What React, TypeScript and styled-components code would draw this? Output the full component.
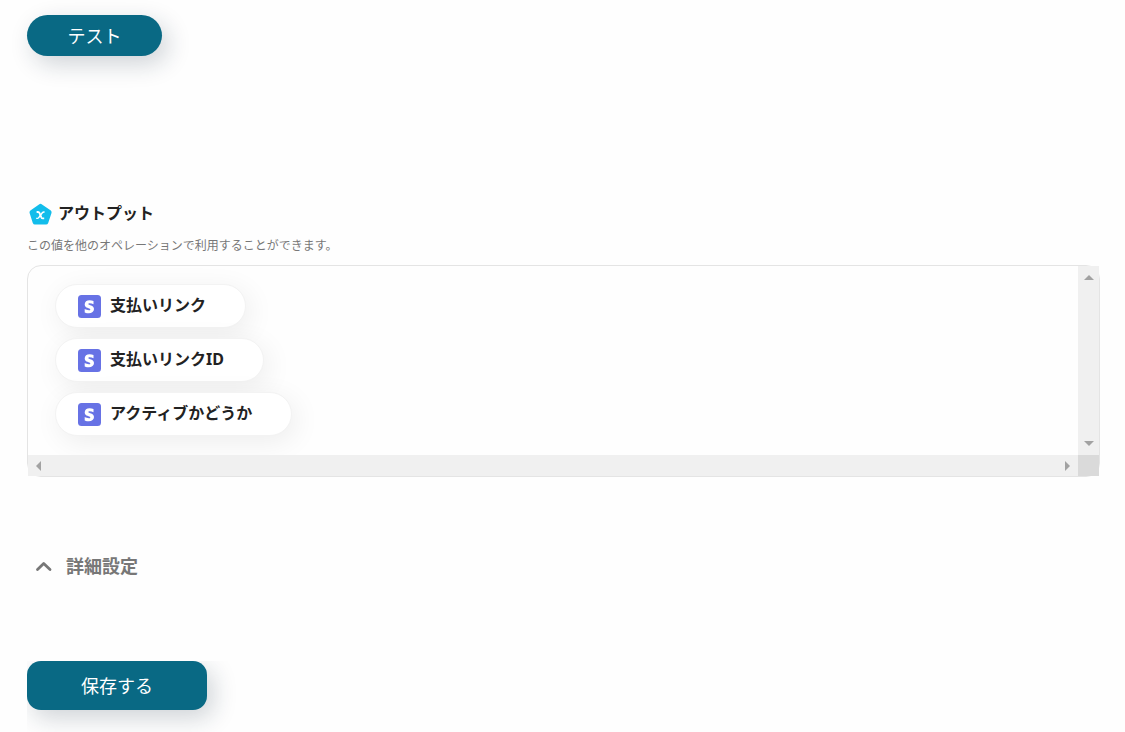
import React from "react";
import styled, { createGlobalStyle } from "styled-components";

const GlobalStyle = createGlobalStyle`
  *, *::before, *::after { box-sizing: border-box; }
  body {
    margin: 0;
    background: #fefefe;
    color: #222;
    font-family: "Noto Sans", "Noto Sans CJK JP", sans-serif;
    font-size: 16px;
  }
`;

const Page = styled.main`
  padding: 15px 25px 0 27px;
`;

const PrimaryButton = styled.button<{ $shape: "pill" | "card" }>`
  display: block;
  width: ${(p) => (p.$shape === "pill" ? "135px" : "180px")};
  height: ${(p) => (p.$shape === "pill" ? "41px" : "49px")};
  padding: 0;
  border: 0;
  border-radius: ${(p) => (p.$shape === "pill" ? "21px" : "14px")};
  background: #096984;
  color: #fff;
  font-family: inherit;
  font-size: 18px;
  line-height: 40px;
  box-shadow: 6px 8px 24px rgba(20, 40, 60, 0.2);
  cursor: pointer;
`;

const OutputSection = styled.section`
  margin-top: 144px;
`;

const Heading = styled.h2`
  display: flex;
  align-items: center;
  gap: 5px;
  height: 26px;
  margin: 0;
  font-size: 16px;
  font-weight: 700;
  line-height: 26px;

  svg {
    margin: 2px 0 0 2px;
  }
`;

const Description = styled.p`
  margin: 10px 0;
  color: #777;
  font-size: 12px;
  line-height: 19px;
`;

const OutputBox = styled.div`
  display: grid;
  grid-template-columns: 1fr 21px;
  grid-template-rows: auto 21px;
  border: 1px solid #e4e4e4;
  border-radius: 14px;
`;

const PillList = styled.ul`
  display: flex;
  flex-direction: column;
  align-items: flex-start;
  gap: 10px;
  margin: 0;
  padding: 18px 27px 19px;
  list-style: none;
`;

const Pill = styled.li`
  display: flex;
  align-items: center;
  gap: 9px;
  height: 44px;
  padding: 0 39px 0 22px;
  border: 1px solid #f3f3f3;
  border-radius: 22px;
  background: #fff;
  box-shadow: 4px 6px 28px rgba(0, 0, 0, 0.07);
  font-weight: 700;
  line-height: 24px;
`;

const PillLabel = styled.span`
  padding-bottom: 2px;
`;

const ScrollTrack = styled.div<{ $axis: "x" | "y" }>`
  display: flex;
  flex-direction: ${(p) => (p.$axis === "x" ? "row" : "column")};
  align-items: center;
  justify-content: space-between;
  padding: ${(p) => (p.$axis === "x" ? "0 8px" : "9px 0")};
  background: #f0f0f0;
`;

const ScrollCorner = styled.div`
  background: #dadada;
`;

const AdvancedToggle = styled.button`
  display: flex;
  align-items: center;
  gap: 14px;
  height: 28px;
  margin: 75px 0 81px 8px;
  padding: 0;
  border: 0;
  background: none;
  color: #777;
  font-family: inherit;
  font-size: 18px;
  font-weight: 700;
  line-height: 28px;
  cursor: pointer;
`;

const SaveArea = styled.div`
  height: 71px;
  overflow: hidden;
`;

const OutputIcon = () => (
  <svg width="24" height="22" viewBox="0 0 24 22" aria-hidden="true">
    <path
      d="M10 1.5Q11.5.2 13 1.5L21.8 7.4Q23 8.4 22.5 10L19.2 20Q18.6 21.5 17 21.5H6Q4.4 21.5 3.8 20L.6 10Q.1 8.4 1.4 7.4Z"
      fill="#12bdeb"
    />
    <path
      d="M7.6 9H9Q10.1 9 10.6 10.2L12.3 14.3Q12.8 15.4 13.8 15.4H15.2"
      fill="none"
      stroke="#fff"
      strokeWidth="1.8"
    />
    <path
      d="M15.6 9H14.9Q14 9 13.3 9.8L9.7 14.6Q9.1 15.4 8.2 15.4H7.2"
      fill="none"
      stroke="#fff"
      strokeWidth="1.4"
    />
  </svg>
);

const StripeIcon = () => (
  <svg width="23" height="23" viewBox="0 0 23 23" aria-hidden="true">
    <rect width="23" height="23" rx="3.5" fill="#6772e5" />
    <path
      d="M10.3 9.1C10.3 8.5 10.8 8.2 11.6 8.2C12.9 8.2 14.3 8.6 15.5 9.2V5.9C14.3 5.4 13 5.2 11.6 5.2C8.7 5.2 6.7 6.8 6.7 9.4C6.7 13.4 12.3 12.7 12.3 14.4C12.3 15.1 11.7 15.3 10.9 15.3C9.6 15.3 8 14.8 6.7 14.1V17.4C8 18 9.6 18.3 10.9 18.3C13.9 18.3 16 16.8 16 14.1C16 9.9 10.3 10.7 10.3 9.1Z"
      fill="#fff"
    />
  </svg>
);

const arrowPaths = {
  up: "M0 7L5 2L10 7Z",
  down: "M0 3L5 8L10 3Z",
  left: "M7 0L2 5L7 10Z",
  right: "M3 0L8 5L3 10Z",
};

const Arrow = ({ dir }: { dir: keyof typeof arrowPaths }) => {
  const vertical = dir === "up" || dir === "down";
  return (
    <svg
      width={vertical ? 10 : 5}
      height={vertical ? 5 : 10}
      viewBox={
        vertical ? `0 ${dir === "up" ? 2 : 3} 10 5` : `${dir === "left" ? 2 : 3} 0 5 10`
      }
      aria-hidden="true"
    >
      <path d={arrowPaths[dir]} fill="#a2a2a2" />
    </svg>
  );
};

const ChevronUp = () => (
  <svg width="17" height="12" viewBox="0 0 17 12" aria-hidden="true">
    <path
      d="M2.5 9.5L8.7 3.5L15 9.5"
      fill="none"
      stroke="currentColor"
      strokeWidth="2.8"
      strokeLinecap="round"
      strokeLinejoin="round"
    />
  </svg>
);

const outputs = ["支払いリンク", "支払いリンクID", "アクティブかどうか"];

export default function App() {
  return (
    <>
      <GlobalStyle />
      <Page>
        <PrimaryButton type="button" $shape="pill">
          テスト
        </PrimaryButton>
        <OutputSection>
          <Heading>
            <OutputIcon />
            アウトプット
          </Heading>
          <Description>この値を他のオペレーションで利用することができます。</Description>
          <OutputBox>
            <PillList>
              {outputs.map((name) => (
                <Pill key={name}>
                  <StripeIcon />
                  <PillLabel>{name}</PillLabel>
                </Pill>
              ))}
            </PillList>
            <ScrollTrack $axis="y">
              <Arrow dir="up" />
              <Arrow dir="down" />
            </ScrollTrack>
            <ScrollTrack $axis="x">
              <Arrow dir="left" />
              <Arrow dir="right" />
            </ScrollTrack>
            <ScrollCorner />
          </OutputBox>
        </OutputSection>
        <AdvancedToggle type="button" aria-expanded="true">
          <ChevronUp />
          詳細設定
        </AdvancedToggle>
        <SaveArea>
          <PrimaryButton type="button" $shape="card">
            保存する
          </PrimaryButton>
        </SaveArea>
      </Page>
    </>
  );
}
